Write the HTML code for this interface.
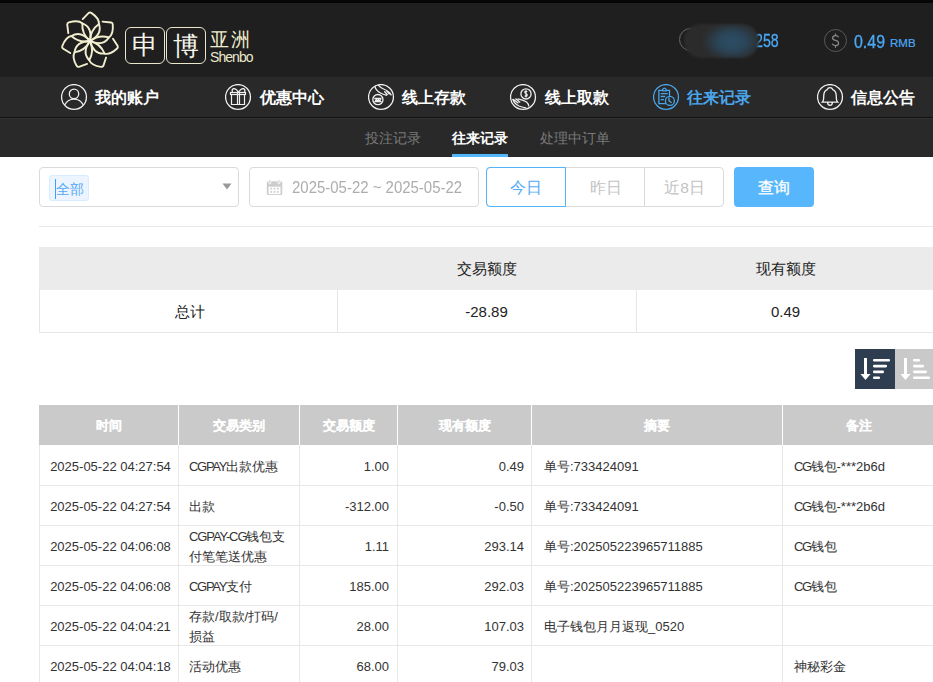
<!DOCTYPE html>
<html><head><meta charset="utf-8">
<style>
*{margin:0;padding:0;box-sizing:border-box}
html,body{width:933px;height:682px;overflow:hidden;background:#fff}
body{position:relative;font-family:"Liberation Sans",sans-serif;color:#333}
.a{position:absolute}
#topbar{left:0;top:0;width:933px;height:3px;background:#060606}
#hdr{left:0;top:3px;width:933px;height:74px;background:#1f1f1f}
#nav{left:0;top:77px;width:933px;height:40px;background:#292929}
#navl1{left:0;top:117px;width:933px;height:1px;background:#121212}
#navl2{left:0;top:118px;width:933px;height:1px;background:#333}
#sub{left:0;top:119px;width:933px;height:38px;background:#292929}
.ni{color:#fff;font-size:16px;font-weight:bold;line-height:20px;top:88px;white-space:nowrap}
.ic{top:84px;width:27px;height:27px}
.sn{top:128px;font-size:14px;line-height:20px;color:#7a7a7a;white-space:nowrap}
.box{border:1px solid #dadada;border-radius:4px;background:#fff}
.th2{top:247px;height:43px;background:#ebebeb}
.cell{font-size:15px;line-height:20px;color:#222;text-align:center;white-space:nowrap}
.mh{top:405px;height:40px;background:#cacaca}
.hd{position:absolute;top:406px;height:40px;line-height:41px;-webkit-text-stroke:0.12px #fff;color:#fff;font-weight:bold;font-size:12.5px;text-align:center;white-space:nowrap}
.vl{position:absolute;width:1px}
.hl{position:absolute;height:1px;background:#e8e8e8;left:39px;width:896px}
.t{position:absolute;font-size:13px;line-height:18px;color:#333;white-space:nowrap}
.r{text-align:right}
.c{text-align:center}
</style></head><body>
<div class="a" id="topbar"></div>
<div class="a" id="hdr"></div>
<div class="a" id="nav"></div>
<div class="a" id="navl1"></div>
<div class="a" id="navl2"></div>
<div class="a" id="sub"></div>

<!-- logo -->
<svg class="a" style="left:58px;top:9px" width="64" height="64" viewBox="-32 -32 64 64">
 <g fill="none" stroke="#f1eecd" stroke-width="1.9" stroke-linecap="round">
  <g id="pt"><path d="M0,0 Q0.3,-11 9,-17"/><path d="M0,0 Q12.5,-6.5 9,-17 C9.3,-20.5 7,-24.2 1.3,-28.1 Q0,-29 -1.3,-28.1 L-7.3,-21.9"/></g>
  <use href="#pt" transform="rotate(51.43)"/><use href="#pt" transform="rotate(102.86)"/><use href="#pt" transform="rotate(154.29)"/><use href="#pt" transform="rotate(205.71)"/><use href="#pt" transform="rotate(257.14)"/><use href="#pt" transform="rotate(308.57)"/><circle cx="0" cy="0" r="1.6" fill="#f2f2ee" stroke="none"/>
 </g>
</svg>
<div class="a" style="left:125px;top:27px;width:40px;height:37px;border:1.5px solid #e9e6cc;border-radius:6px"></div>
<div class="a" style="left:166px;top:27px;width:40px;height:37px;border:1.5px solid #e9e6cc;border-radius:6px"></div>
<div class="a" style="left:125px;top:27px;width:40px;height:37px;line-height:37px;text-align:center;font-size:26px;color:#f6f5ea;font-weight:300">申</div>
<div class="a" style="left:166px;top:27.5px;width:40px;height:37px;line-height:37px;text-align:center;font-size:26px;color:#f6f5ea;font-weight:300">博</div>
<div class="a" style="left:210px;top:29px;font-size:19px;line-height:22px;color:#f0edcc;letter-spacing:2.2px;font-weight:500;white-space:nowrap">亚洲</div>
<div class="a" style="left:210px;top:50px;font-size:14px;line-height:15px;color:#ebe8cc;letter-spacing:-0.95px">Shenbo</div>

<!-- account right -->
<div class="a" style="left:679px;top:28px;width:23px;height:23px;border:1.3px solid #6a6a6a;border-radius:50%"></div>
<div class="a" style="left:755px;top:30px;font-size:18px;line-height:22px;color:#4aa9f6;-webkit-text-stroke:0.3px #4aa9f6;transform:scaleX(0.79);transform-origin:0 0">258</div>
<div class="a" style="left:684px;top:24px;width:75px;height:34px;border-radius:17px;background:radial-gradient(ellipse 42% 62% at 64% 52%,#2d4d65 0%,#2b4558 45%,#2b3237 80%,#2b2b2b 100%);filter:blur(1.2px)"></div>
<div class="a" style="left:824px;top:29px;width:23px;height:23px;border:1.3px solid #5a5a5a;border-radius:50%"></div>
<svg class="a" style="left:824px;top:29px" width="23" height="23" viewBox="0 0 23 23"><g fill="none" stroke="#8a8a8a" stroke-width="1.2"><path d="M14.6,8.3 Q13.8,6.6 11.5,6.6 Q8.6,6.6 8.6,9 Q8.6,10.8 11.5,11.4 Q14.6,12 14.6,14.2 Q14.6,16.6 11.5,16.6 Q9,16.6 8.2,14.8"/><path d="M11.5,4.4 V6.6 M11.5,16.6 V18.8"/></g></svg>
<div class="a" style="left:854px;top:30.5px;font-size:18px;line-height:22px;color:#4aa9f6;-webkit-text-stroke:0.3px #4aa9f6;white-space:nowrap;transform:scaleX(0.885);transform-origin:0 0">0.49</div>
<div class="a" style="left:890px;top:37px;font-size:11.5px;line-height:13px;color:#4aa9f6;-webkit-text-stroke:0.2px #4aa9f6;white-space:nowrap">RMB</div>

<!-- nav icons -->
<svg class="a ic" style="left:61px" viewBox="0 0 27 27"><g fill="none" stroke="#f0f0f0" stroke-width="1.3"><circle cx="13" cy="13" r="12.45"/><circle cx="13" cy="9.9" r="4.7"/><path d="M3.7,21 C6,16.8 9.5,15.2 13,15.2 C16.5,15.2 20,16.8 22.3,21"/></g></svg>
<div class="a ni" style="left:95px">我的账户</div>

<svg class="a ic" style="left:225px" viewBox="0 0 27 27"><g fill="none" stroke="#f0f0f0" stroke-width="1.2"><circle cx="13" cy="13" r="12.45" stroke-width="1.3"/><rect x="5.5" y="8.5" width="15" height="2"/><path d="M6.5,10.5 V20.5 H19.5 V10.5"/><path d="M12.5,8.5 V20.5 M14.5,8.5 V20.5"/><path d="M13.5,8.3 Q11,4.2 8.4,4.6 Q6.5,5.4 7.4,8.3 M13.5,8.3 Q16,4.2 18.6,4.6 Q20.5,5.4 19.6,8.3"/></g></svg>
<div class="a ni" style="left:260px">优惠中心</div>

<svg class="a ic" style="left:368px" viewBox="0 0 27 27"><g fill="none" stroke="#f0f0f0" stroke-width="1.3"><circle cx="13" cy="13" r="12.45"/><path d="M6.8,2.2 Q8,7 12.5,9 Q16,10.8 18.9,11.3 M9.9,0.9 Q12,3.3 15.6,5 Q19.3,6.2 21.8,9 L23.4,11.3 M16.3,7.2 L19.6,11 M18.4,6.5 L21.6,10.4"/><circle cx="9.9" cy="15.6" r="5.1"/><path d="M6.3,14.5 H13.5 M6.3,17.6 H13.5"/><path d="M7.2,17.2 L8.4,14.9 L9.5,17.2 L10.6,14.9 L11.7,17.2 L12.8,14.9" stroke-width="1.1"/></g></svg>
<div class="a ni" style="left:402px">线上存款</div>

<svg class="a ic" style="left:510px" viewBox="0 0 27 27"><g fill="none" stroke="#f0f0f0" stroke-width="1.3"><circle cx="13" cy="13" r="12.45"/><circle cx="16" cy="9.9" r="5.1"/><path d="M17.3,7.6 Q16.2,6.8 15,7.4 Q14.3,8.3 15.6,9.3 L16.6,10 Q17.8,11 17,12 Q15.8,12.6 14.6,11.8 M16,6.3 V13.4" stroke-width="1.1"/><path d="M2.6,15 Q4.5,20 9,22 Q13,23.6 16.2,23.8 M7.6,14.9 Q13,15.8 16.6,18 Q18.6,19.8 18.8,22.4 M3.2,15.3 L8.4,19.2 M5.4,14.6 L10.2,18.4"/></g></svg>
<div class="a ni" style="left:545px">线上取款</div>

<svg class="a ic" style="left:653px" viewBox="0 0 27 27"><g fill="none" stroke="#4aa6ec" stroke-width="1.3"><circle cx="13" cy="13" r="12.45"/><path d="M12.8,19.6 H5.9 V6.4 H9.6 M13.2,6.4 H16.5 V12.4"/><path d="M9.6,6.9 V5.6 Q11.4,2.6 13.2,5.6 V6.9 Z"/><path d="M7.7,9.7 H14.7 M7.7,12.5 H12.3 M7.7,15.6 H11"/><circle cx="16.9" cy="16.9" r="4.5"/><path d="M16,13.6 V16.9 L18.6,18.7"/></g></svg>
<div class="a ni" style="left:687px;color:#4aa6ec">往来记录</div>

<svg class="a ic" style="left:817px" viewBox="0 0 27 27"><g fill="none" stroke="#f0f0f0" stroke-width="1.3"><circle cx="13" cy="13" r="12.45"/><path d="M13,3.6 Q10.8,3.6 10.2,5.6 Q7,7 6.8,11 L6.6,15 Q6.4,17 5.3,18.1 H20.7 Q19.6,17 19.4,15 L19.2,11 Q19,7 15.8,5.6 Q15.2,3.6 13,3.6 Z M10.6,18.3 Q10.6,21.4 13,21.4 Q15.4,21.4 15.4,18.3"/></g></svg>
<div class="a ni" style="left:851px">信息公告</div>

<!-- sub nav -->
<div class="a sn" style="left:365px">投注记录</div>
<div class="a sn" style="left:452px;color:#fff;font-weight:bold">往来记录</div>
<div class="a sn" style="left:540px">处理中订单</div>
<div class="a" style="left:452px;top:154px;width:56px;height:3px;background:#52b6f9"></div>

<!-- filters -->
<div class="a box" style="left:39px;top:167px;width:200px;height:40px"></div>
<div class="a" style="left:49px;top:175px;width:40px;height:26px;background:#ecf5ff;border:1px solid #d9ecff;border-radius:3px"></div>
<div class="a" style="left:55px;top:179px;width:1px;height:20px;background:#409eff"></div>
<div class="a" style="left:56px;top:179px;font-size:14px;line-height:20px;color:#57a9f5">全部</div>
<svg class="a" style="left:222px;top:183px" width="10" height="7" viewBox="0 0 10 7"><path d="M0.5,0.5 H9.5 L5,6.5Z" fill="#999"/></svg>

<div class="a box" style="left:249px;top:167px;width:230px;height:40px"></div>
<svg class="a" style="left:266px;top:179px" width="17" height="17" viewBox="0 0 17 17"><rect x="0.8" y="2.2" width="15.5" height="13.8" rx="1.6" fill="#cdcdcd"/><rect x="2.6" y="7.7" width="11.9" height="7.4" fill="#fff"/><g fill="#d0d0d0"><rect x="4.3" y="8.8" width="1.8" height="1.8"/><rect x="7.6" y="8.8" width="1.8" height="1.8"/><rect x="10.9" y="8.8" width="1.8" height="1.8"/><rect x="4.3" y="12" width="1.8" height="1.8"/><rect x="7.6" y="12" width="1.8" height="1.8"/><rect x="10.9" y="12" width="1.8" height="1.8"/></g><rect x="2.9" y="0.6" width="2" height="4.2" rx="1" fill="#cdcdcd" stroke="#fff" stroke-width="0.9"/><rect x="11.9" y="0.6" width="2" height="4.2" rx="1" fill="#cdcdcd" stroke="#fff" stroke-width="0.9"/></svg>
<div class="a" style="left:292px;top:177.5px;font-size:16px;line-height:20px;color:#adadad;white-space:nowrap;transform:scaleX(0.935);transform-origin:0 0">2025-05-22 ~ 2025-05-22</div>

<div class="a" style="left:486px;top:167px;width:238px;height:40px;border:1px solid #dadada;border-radius:4px"></div>
<div class="a" style="left:644px;top:167px;width:1px;height:40px;background:#dadada"></div>
<div class="a" style="left:565px;top:167px;width:1px;height:40px;background:#dadada"></div>
<div class="a" style="left:486px;top:167px;width:80px;height:40px;border:1px solid #55b3f8;border-radius:4px 0 0 4px"></div>
<div class="a c" style="left:486px;top:178px;width:80px;font-size:15.5px;line-height:20px;color:#52abf7">今日</div>
<div class="a c" style="left:566px;top:178px;width:79px;font-size:15.5px;line-height:20px;color:#c3c3c3">昨日</div>
<div class="a c" style="left:645px;top:178px;width:79px;font-size:15.5px;line-height:20px;color:#c3c3c3">近8日</div>
<div class="a c" style="left:734px;top:167px;width:80px;height:40px;background:#58b7fc;border-radius:4px;color:#fff;font-size:16px;line-height:42px;font-weight:500;-webkit-text-stroke:0.3px #fff">查询</div>

<div class="a" style="left:39px;top:226px;width:894px;height:1px;background:#e8e8e8"></div>

<!-- summary -->
<div class="a th2" style="left:39px;width:897px"></div>
<div class="a" style="left:39px;top:290px;width:897px;height:43px;border:1px solid #e6e6e6;border-top:none"></div>
<div class="a" style="left:337px;top:290px;width:1px;height:42px;background:#e6e6e6"></div>
<div class="a" style="left:636px;top:290px;width:1px;height:42px;background:#e6e6e6"></div>
<div class="a cell" style="left:337px;top:259px;width:299px">交易额度</div>
<div class="a cell" style="left:636px;top:259px;width:299px">现有额度</div>
<div class="a cell" style="left:40px;top:302px;width:299px">总计</div>
<div class="a cell" style="left:337px;top:302px;width:299px">-28.89</div>
<div class="a cell" style="left:636px;top:302px;width:299px">0.49</div>

<!-- sort buttons -->
<div class="a" style="left:855px;top:349px;width:40px;height:40px;background:#2e3d50"></div>
<div class="a" style="left:895px;top:349px;width:40px;height:40px;background:#c9c9c9"></div>
<svg class="a" style="left:855px;top:349px" width="40" height="40" viewBox="0 0 40 40"><g fill="#fff"><rect x="9" y="9" width="3" height="17"/><path d="M5.5,25 H15.5 L10.5,31Z"/><rect x="18" y="10" width="17" height="2.6" rx="1.1"/><rect x="18" y="15.8" width="14" height="2.6" rx="1.1"/><rect x="18" y="21.6" width="11" height="2.6" rx="1.1"/><rect x="18" y="27.4" width="7" height="2.6" rx="1.1"/></g></svg>
<svg class="a" style="left:895px;top:349px" width="40" height="40" viewBox="0 0 40 40"><g fill="#fff"><rect x="9" y="9" width="3" height="17"/><path d="M5.5,25 H15.5 L10.5,31Z"/><rect x="18" y="10" width="7" height="2.6" rx="1.1"/><rect x="18" y="15.8" width="11" height="2.6" rx="1.1"/><rect x="18" y="21.6" width="14" height="2.6" rx="1.1"/><rect x="18" y="27.4" width="17" height="2.6" rx="1.1"/></g></svg>

<!-- main table -->
<div class="a mh" style="left:39px;width:896px"></div>
<div class="vl" style="left:178px;top:405px;height:40px;background:#fff"></div>
<div class="vl" style="left:299px;top:405px;height:40px;background:#fff"></div>
<div class="vl" style="left:397px;top:405px;height:40px;background:#fff"></div>
<div class="vl" style="left:531px;top:405px;height:40px;background:#fff"></div>
<div class="vl" style="left:782px;top:405px;height:40px;background:#fff"></div>
<div class="hd" style="left:39px;width:139px">时间</div>
<div class="hd" style="left:179px;width:120px">交易类别</div>
<div class="hd" style="left:300px;width:97px">交易额度</div>
<div class="hd" style="left:398px;width:133px">现有额度</div>
<div class="hd" style="left:532px;width:250px">摘要</div>
<div class="hd" style="left:783px;width:152px">备注</div>

<div class="vl" style="left:39px;top:445px;height:237px;background:#e8e8e8"></div>
<div class="vl" style="left:178px;top:445px;height:237px;background:#e8e8e8"></div>
<div class="vl" style="left:299px;top:445px;height:237px;background:#e8e8e8"></div>
<div class="vl" style="left:397px;top:445px;height:237px;background:#e8e8e8"></div>
<div class="vl" style="left:531px;top:445px;height:237px;background:#e8e8e8"></div>
<div class="vl" style="left:782px;top:445px;height:237px;background:#e8e8e8"></div>
<div class="hl" style="top:485px"></div>
<div class="hl" style="top:525px"></div>
<div class="hl" style="top:565px"></div>
<div class="hl" style="top:605px"></div>
<div class="hl" style="top:645px"></div>

<!-- rows -->
<div class="t c" style="left:41px;top:458px;width:139px">2025-05-22 04:27:54</div>
<div class="t" style="left:189px;top:458px"><span style="letter-spacing:-1.3px">CGPAY</span>出款优惠</div>
<div class="t r" style="left:300px;top:458px;width:89px">1.00</div>
<div class="t r" style="left:398px;top:458px;width:126px">0.49</div>
<div class="t" style="left:544px;top:458px">单号:733424091</div>
<div class="t" style="left:794px;top:458px"><span style="letter-spacing:-1.5px">CG</span>钱包-***2b6d</div>

<div class="t c" style="left:41px;top:498px;width:139px">2025-05-22 04:27:54</div>
<div class="t" style="left:189px;top:498px">出款</div>
<div class="t r" style="left:300px;top:498px;width:89px">-312.00</div>
<div class="t r" style="left:398px;top:498px;width:126px">-0.50</div>
<div class="t" style="left:544px;top:498px">单号:733424091</div>
<div class="t" style="left:794px;top:498px"><span style="letter-spacing:-1.5px">CG</span>钱包-***2b6d</div>

<div class="t c" style="left:41px;top:538px;width:139px">2025-05-22 04:06:08</div>
<div class="t" style="left:189px;top:527px;line-height:20px"><span style="letter-spacing:-1.1px">CGPAY-CG</span>钱包支<br>付笔笔送优惠</div>
<div class="t r" style="left:300px;top:538px;width:89px">1.11</div>
<div class="t r" style="left:398px;top:538px;width:126px">293.14</div>
<div class="t" style="left:544px;top:538px">单号:202505223965711885</div>
<div class="t" style="left:794px;top:538px"><span style="letter-spacing:-1.5px">CG</span>钱包</div>

<div class="t c" style="left:41px;top:578px;width:139px">2025-05-22 04:06:08</div>
<div class="t" style="left:189px;top:578px"><span style="letter-spacing:-1.3px">CGPAY</span>支付</div>
<div class="t r" style="left:300px;top:578px;width:89px">185.00</div>
<div class="t r" style="left:398px;top:578px;width:126px">292.03</div>
<div class="t" style="left:544px;top:578px">单号:202505223965711885</div>
<div class="t" style="left:794px;top:578px"><span style="letter-spacing:-1.5px">CG</span>钱包</div>

<div class="t c" style="left:41px;top:618px;width:139px">2025-05-22 04:04:21</div>
<div class="t" style="left:189px;top:607px;line-height:20px">存款/取款/打码/<br>损益</div>
<div class="t r" style="left:300px;top:618px;width:89px">28.00</div>
<div class="t r" style="left:398px;top:618px;width:126px">107.03</div>
<div class="t" style="left:544px;top:618px">电子钱包月月返现_0520</div>

<div class="t c" style="left:41px;top:658px;width:139px">2025-05-22 04:04:18</div>
<div class="t" style="left:189px;top:658px">活动优惠</div>
<div class="t r" style="left:300px;top:658px;width:89px">68.00</div>
<div class="t r" style="left:398px;top:658px;width:126px">79.03</div>
<div class="t" style="left:794px;top:658px">神秘彩金</div>
</body></html>
